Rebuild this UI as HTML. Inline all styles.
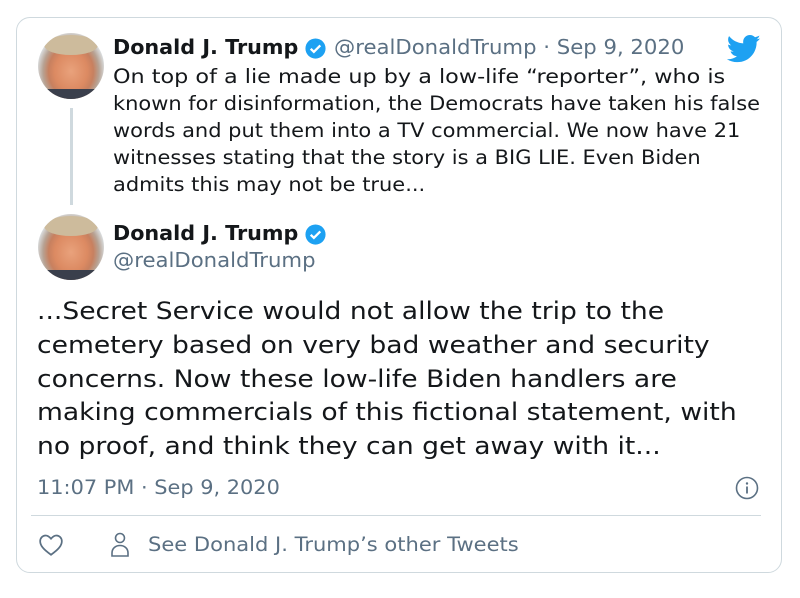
<!DOCTYPE html>
<html><head><meta charset="utf-8"><style>
body{margin:0;width:800px;height:598px;background:#fff;font-family:"DejaVu Sans","Liberation Sans",sans-serif;position:relative;overflow:hidden;color:#14171a}
.card{position:absolute;left:16px;top:17px;width:766px;height:556px;border:1px solid #cfd9de;border-radius:14px;box-sizing:border-box}
.av{position:absolute;width:66px;height:66px;border-radius:50%;background:radial-gradient(ellipse at 50% 58%,#e9a27c 0%,#dc8a62 35%,#c7805f 48%,#b7a293 60%,#dfe6ea 75%);overflow:hidden}
.av:before{content:"";position:absolute;left:6px;top:2px;width:54px;height:20px;border-radius:50%;background:#cdbb9c}
.av:after{content:"";position:absolute;left:-4px;top:56px;width:74px;height:20px;background:#3a3f4c}
.t{position:absolute;white-space:nowrap;transform-origin:0 0}
.name{font-weight:bold;font-size:20px;transform:scaleX(1.036)}
.gray{color:#5b7083}
.s1{font-size:19.5px;left:113px;transform:scaleX(1.0745)}
.s2{font-size:24px;left:37px;transform:scaleX(1.107)}
</style></head><body>
<div class="card"></div>
<div class="av" style="left:38px;top:33px"></div>
<div style="position:absolute;left:70px;top:108px;width:3px;height:97px;background:#cfd9de"></div>
<div class="av" style="left:38px;top:214px"></div>
<svg style="position:absolute;left:727px;top:34px" width="34" height="30" viewBox="0 0 24 20"><path fill="#1da1f2" d="M23.6 2.4c-.9.4-1.8.6-2.8.8 1-.6 1.8-1.5 2.1-2.7-.9.6-2 1-3.1 1.2C18.9.7 17.6.1 16.2.1c-2.7 0-4.8 2.2-4.8 4.8 0 .4 0 .8.1 1.1C7.4 5.8 3.9 3.9 1.5.9 1 1.6.8 2.5.8 3.4c0 1.7.9 3.2 2.2 4-.8 0-1.5-.2-2.2-.6v.1c0 2.3 1.7 4.3 3.9 4.7-.4.1-.8.2-1.3.2-.3 0-.6 0-.9-.1.6 1.9 2.4 3.3 4.5 3.4-1.7 1.3-3.7 2.1-6 2.1-.4 0-.8 0-1.2-.1 2.1 1.4 4.7 2.2 7.4 2.2 8.9 0 13.7-7.4 13.7-13.7v-.6c1-.7 1.8-1.5 2.4-2.5z"/></svg>
<div class="t name" style="left:113px;top:35px">Donald J. Trump</div>
<svg style="position:absolute;left:304px;top:37px" width="23" height="23" viewBox="0 0 24 24"><circle cx="12" cy="12" r="10.5" fill="#1da1f2"/><path d="M7 12.3l3.3 3.2L17 8.8" stroke="#fff" stroke-width="2.4" fill="none"/></svg>
<div class="t gray" style="left:334px;top:35px;font-size:20px;transform:scaleX(1.06)">@realDonaldTrump · Sep 9, 2020</div>
<div class="t s1" style="top:65px;transform:scaleX(1.144)">On top of a lie made up by a low-life “reporter”, who is</div>
<div class="t s1" style="top:92px">known for disinformation, the Democrats have taken his false</div>
<div class="t s1" style="top:119px">words and put them into a TV commercial. We now have 21</div>
<div class="t s1" style="top:146px">witnesses stating that the story is a BIG LIE. Even Biden</div>
<div class="t s1" style="top:173px">admits this may not be true...</div>
<div class="t name" style="left:113px;top:221px">Donald J. Trump</div>
<svg style="position:absolute;left:304px;top:223px" width="23" height="23" viewBox="0 0 24 24"><circle cx="12" cy="12" r="10.5" fill="#1da1f2"/><path d="M7 12.3l3.3 3.2L17 8.8" stroke="#fff" stroke-width="2.4" fill="none"/></svg>
<div class="t gray" style="left:113px;top:248px;font-size:20px;transform:scaleX(1.06)">@realDonaldTrump</div>
<div class="t s2" style="top:297px">...Secret Service would not allow the trip to the</div>
<div class="t s2" style="top:331px">cemetery based on very bad weather and security</div>
<div class="t s2" style="top:365px">concerns. Now these low-life Biden handlers are</div>
<div class="t s2" style="top:398px">making commercials of this fictional statement, with</div>
<div class="t s2" style="top:432px">no proof, and think they can get away with it...</div>
<div class="t gray" style="left:37px;top:476px;font-size:19.5px;transform:scaleX(1.07)">11:07 PM · Sep 9, 2020</div>
<svg style="position:absolute;left:735px;top:476px" width="24" height="24" viewBox="0 0 24 24"><circle cx="12" cy="12" r="10.5" fill="none" stroke="#5b7083" stroke-width="1.6"/><circle cx="12" cy="7.5" r="1.2" fill="#5b7083"/><path d="M12 10.5v7" stroke="#5b7083" stroke-width="1.8"/></svg>
<div style="position:absolute;left:31px;top:515px;width:730px;height:1px;background:#cfd9de"></div>
<svg style="position:absolute;left:38px;top:533px" width="26" height="24" viewBox="0 0 24 22"><path d="M12 20C5 15 2 11.5 2 7.5 2 4.5 4.3 2.2 7 2.2c2 0 3.5 1.2 5 3 1.5-1.8 3-3 5-3 2.7 0 5 2.3 5 5.3 0 4-3 7.5-10 12.5z" fill="none" stroke="#5b7083" stroke-width="1.6"/></svg>
<svg style="position:absolute;left:109px;top:531px" width="22" height="28" viewBox="0 0 22 28"><circle cx="11" cy="7" r="4.5" fill="none" stroke="#5b7083" stroke-width="1.6"/><path d="M3 25v-3c0-5 4-7.5 8-7.5s8 2.5 8 7.5v3z" fill="none" stroke="#5b7083" stroke-width="1.6"/></svg>
<div class="t gray" style="left:148px;top:533px;font-size:19.5px;transform:scaleX(1.078)">See Donald J. Trump’s other Tweets</div>
</body></html>
